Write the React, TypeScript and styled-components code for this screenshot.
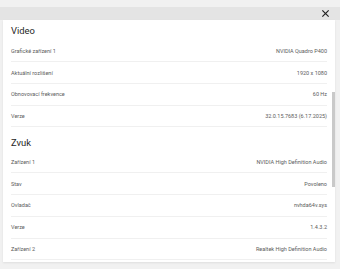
import React from 'react';
import styled, { createGlobalStyle } from 'styled-components';

const GlobalStyle = createGlobalStyle`
  html, body {
    margin: 0;
    padding: 0;
    background: #f1f1f1;
  }
  body {
    font-family: Roboto, "Noto Sans", sans-serif;
  }
`;

type Row = { label: string; value: string };
type Section = { title: string; rows: Row[] };

const sections: Section[] = [
  {
    title: 'Video',
    rows: [
      { label: 'Grafické zařízení 1', value: 'NVIDIA Quadro P400' },
      { label: 'Aktuální rozlišení', value: '1920 x 1080' },
      { label: 'Obnovovací frekvence', value: '60 Hz' },
      { label: 'Verze', value: '32.0.15.7683 (6.17.2025)' },
    ],
  },
  {
    title: 'Zvuk',
    rows: [
      { label: 'Zařízení 1', value: 'NVIDIA High Definition Audio' },
      { label: 'Stav', value: 'Povoleno' },
      { label: 'Ovladač', value: 'nvhda64v.sys' },
      { label: 'Verze', value: '1.4.3.2' },
      { label: 'Zařízení 2', value: 'Realtek High Definition Audio' },
    ],
  },
];

const App: React.FC = () => {
  return (
    <>
      <GlobalStyle />
      <Page>
        <Header>
          <Close aria-label="Zavřít">
            <svg width="9" height="9" viewBox="0 0 10 10">
              <path d="M1.5 1.5 L8.5 8.5 M8.5 1.5 L1.5 8.5" stroke="#222" strokeWidth="1.3" />
            </svg>
          </Close>
        </Header>
        <Panel>
          {sections.map((section, i) => (
            <Block key={section.title}>
              <SectionTitle first={i === 0}>{section.title}</SectionTitle>
              {section.rows.map((row, index) => (
                <Item key={index}>
                  <Label>{row.label}</Label>
                  <Value>{row.value}</Value>
                </Item>
              ))}
            </Block>
          ))}
          <Thumb />
        </Panel>
      </Page>
    </>
  );
};

const Page = styled.div`
  width: 340px;
  height: 269px;
  padding-top: 7px;
  box-sizing: border-box;
  overflow: hidden;
`;

const Header = styled.div`
  height: 13px;
  background-color: #e4e4e4;
  display: flex;
  align-items: center;
  justify-content: flex-end;
  padding-right: 10px;
`;

const Close = styled.div`
  display: flex;
  align-items: center;
`;

const Panel = styled.div`
  position: relative;
  margin: 0 5px 0 3px;
  height: 242px;
  background-color: #fff;
  padding: 0 8px;
  box-shadow: 0 1px 2px rgba(0, 0, 0, 0.08);
  overflow: hidden;
`;

const Block = styled.div`
  display: flex;
  flex-direction: column;
`;

const SectionTitle = styled.div<{ first: boolean }>`
  height: ${({ first }) => (first ? '20.5px' : '24.5px')};
  display: flex;
  align-items: ${({ first }) => (first ? 'center' : 'flex-end')};
  padding-bottom: ${({ first }) => (first ? '0' : '4px')};
  box-sizing: border-box;
  font-size: 9.4px;
  color: #262626;
`;

const Item = styled.div`
  height: 21.7px;
  box-sizing: border-box;
  display: flex;
  align-items: center;
  justify-content: space-between;
  border-bottom: 1px solid #f0f0f0;
  font-size: 5.5px;
  color: #5c5c5c;
`;

const Label = styled.div``;

const Value = styled.div`
  text-align: right;
`;

const Thumb = styled.div`
  position: absolute;
  right: 0;
  top: 72px;
  width: 3px;
  height: 95px;
  background-color: #c9c9c9;
`;

export default App;
